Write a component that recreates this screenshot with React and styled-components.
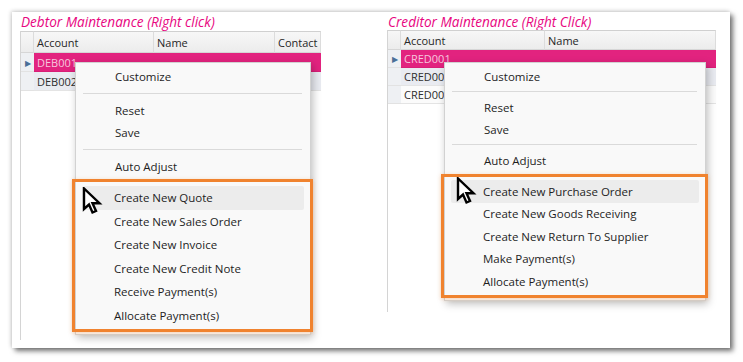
import React from 'react';
import styled, { createGlobalStyle } from 'styled-components';

const GlobalStyle = createGlobalStyle`
  html, body {
    margin: 0;
    padding: 0;
    background: #ffffff;
  }
`;

const Page = styled.div`
  width: 743px;
  height: 362px;
  padding: 12px 0 0 12px;
  box-sizing: border-box;
`;

const Card = styled.div`
  width: 718px;
  height: 336px;
  background: #fff;
  display: flex;
  gap: 67px;
  padding: 0 0 0 8px;
  box-sizing: border-box;
  box-shadow: 3px 3px 5px rgba(0, 0, 0, 0.55), -1px -1px 4px rgba(0, 0, 0, 0.18);
`;

const Panel = styled.div`
  position: relative;
  width: ${(p) => p.$w}px;
  display: flex;
  flex-direction: column;
`;

const Title = styled.div`
  font-family: 'Open Sans', 'Noto Sans', sans-serif;
  font-style: italic;
  font-size: 13.6px;
  line-height: 19px;
  color: #e8067f;
  height: ${(p) => p.$h}px;
  padding-left: 1px;
  white-space: nowrap;
`;

const Grid = styled.div`
  height: ${(p) => p.$h}px;
  border-left: 1px solid #d4d4d4;
  background: #fff;
  font-family: 'Open Sans', 'Noto Sans', sans-serif;
  font-size: 11px;
  color: #2a2a2a;
  box-sizing: border-box;
`;

const Row = styled.div`
  display: grid;
  grid-template-columns: ${(p) => p.$cols};
  height: ${(p) => p.$h}px;
  align-items: stretch;
`;

const HeadCell = styled.div`
  display: flex;
  align-items: center;
  padding-left: 3px;
  background: linear-gradient(#f7f7f7, #ececec);
  border-top: 1px solid #d0d0d0;
  border-bottom: 1px solid #d6d6d6;
  border-right: 1px solid #dcdcdc;
  color: #262626;
`;

const Indicator = styled.div`
  background: #eef0f3;
  border-bottom: 1px solid #e2e2e2;
  display: flex;
  align-items: center;
  justify-content: center;
  color: #4a6f98;
  font-size: 8px;
`;

const Cell = styled.div`
  display: flex;
  align-items: center;
  padding-left: 3px;
  background: ${(p) => (p.$sel ? '#e2237f' : p.$alt ? '#e9ebf1' : '#fbfbfb')};
  color: ${(p) => (p.$sel ? '#f6c6dd' : '#2e2e2e')};
  border-bottom: 1px solid ${(p) => (p.$sel ? '#d81f77' : '#e4e4e4')};
`;

const Menu = styled.div`
  position: absolute;
  left: ${(p) => p.$x}px;
  top: ${(p) => p.$y}px;
  width: ${(p) => p.$w}px;
  background: #f9f9f9;
  border: 1px solid #d2d2d2;
  box-shadow: 2px 3px 8px rgba(0, 0, 0, 0.25);
  padding: 2px 0;
  font-family: 'Open Sans', 'Noto Sans', sans-serif;
  font-size: 11.5px;
  color: #1e1e1e;
  box-sizing: border-box;
`;

const Item = styled.div`
  height: ${(p) => p.$h}px;
  display: flex;
  align-items: center;
  margin: 0 6px 0 7px;
  padding-left: 32px;
  border-radius: 2px;
  background: ${(p) => (p.$hot ? '#ececec' : 'transparent')};
  white-space: nowrap;
`;

const Separator = styled.div`
  height: 1px;
  background: #dadada;
  margin: ${(p) => p.$m}px 8px ${(p) => p.$m}px 7px;
`;

const Highlight = styled.div`
  border: 3px solid #f0832f;
  margin: ${(p) => p.$mt}px -3px 0 -4px;
  padding: ${(p) => p.$pt}px 0 2px;
  box-shadow: 0 1px 4px rgba(240, 131, 47, 0.35);
`;

const Cursor = styled.svg`
  position: absolute;
  left: ${(p) => p.$x}px;
  top: ${(p) => p.$y}px;
`;

function Pointer({ x, y }) {
  return (
    <Cursor $x={x} $y={y} width="22" height="28" viewBox="0 0 22 28">
      <path
        d="M2 1.5 L2 22 L7 17.5 L10.5 25.5 L14 24 L10.5 16.2 L17.5 16.2 Z"
        fill="#fff"
        stroke="#000"
        strokeWidth="2.4"
        strokeLinejoin="miter"
      />
    </Cursor>
  );
}

function ContextMenu({ x, y, w, rowH, sep, boxTop, boxPad, items, hot }) {
  return (
    <Menu $x={x} $y={y} $w={w}>
      <Item $h={22}>Customize</Item>
      <Separator $m={sep} />
      <Item $h={22}>Reset</Item>
      <Item $h={22}>Save</Item>
      <Separator $m={sep} />
      <Item $h={22}>Auto Adjust</Item>
      <Highlight $mt={boxTop} $pt={boxPad}>
        {items.map((t, i) => (
          <Item key={t} $h={rowH} $hot={i === hot}>
            {t}
          </Item>
        ))}
      </Highlight>
    </Menu>
  );
}

function DataGrid({ h, headH, rowH, cols, headers, rows }) {
  return (
    <Grid $h={h}>
      <Row $cols={cols} $h={headH}>
        <HeadCell />
        {headers.map((c) => (
          <HeadCell key={c}>{c}</HeadCell>
        ))}
      </Row>
      {rows.map((r, i) => (
        <Row key={r} $cols={cols} $h={rowH}>
          <Indicator>{i === 0 ? '▶' : ''}</Indicator>
          {headers.map((c, j) => (
            <Cell key={c} $sel={i === 0} $alt={i === 1}>
              {j === 0 ? r : ''}
            </Cell>
          ))}
        </Row>
      ))}
    </Grid>
  );
}

export default function App() {
  return (
    <>
      <GlobalStyle />
      <Page>
        <Card>
          <Panel $w={300}>
            <Title $h={19}>Debtor Maintenance (Right click)</Title>
            <DataGrid
              h={309}
              headH={22}
              rowH={19}
              cols="13px 120px 121px 46px"
              headers={['Account', 'Name', 'Contact']}
              rows={['DEB001', 'DEB002']}
            />
            <ContextMenu
              x={55}
              y={50}
              w={236}
              sep={5.5}
              boxTop={2}
              boxPad={4}
              rowH={23.5}
              hot={0}
              items={[
                'Create New Quote',
                'Create New Sales Order',
                'Create New Invoice',
                'Create New Credit Note',
                'Receive Payment(s)',
                'Allocate Payment(s)',
              ]}
            />
            <Pointer x={62} y={175} />
          </Panel>
          <Panel $w={328}>
            <Title $h={18}>Creditor Maintenance (Right Click)</Title>
            <DataGrid
              h={282}
              headH={20}
              rowH={18}
              cols="13px 144px 171px"
              headers={['Account', 'Name']}
              rows={['CRED001', 'CRED002', 'CRED003']}
            />
            <ContextMenu
              x={57}
              y={50}
              w={262}
              sep={4}
              boxTop={3}
              boxPad={3}
              rowH={22.5}
              hot={0}
              items={[
                'Create New Purchase Order',
                'Create New Goods Receiving',
                'Create New Return To Supplier',
                'Make Payment(s)',
                'Allocate Payment(s)',
              ]}
            />
            <Pointer x={69} y={165} />
          </Panel>
        </Card>
      </Page>
    </>
  );
}
